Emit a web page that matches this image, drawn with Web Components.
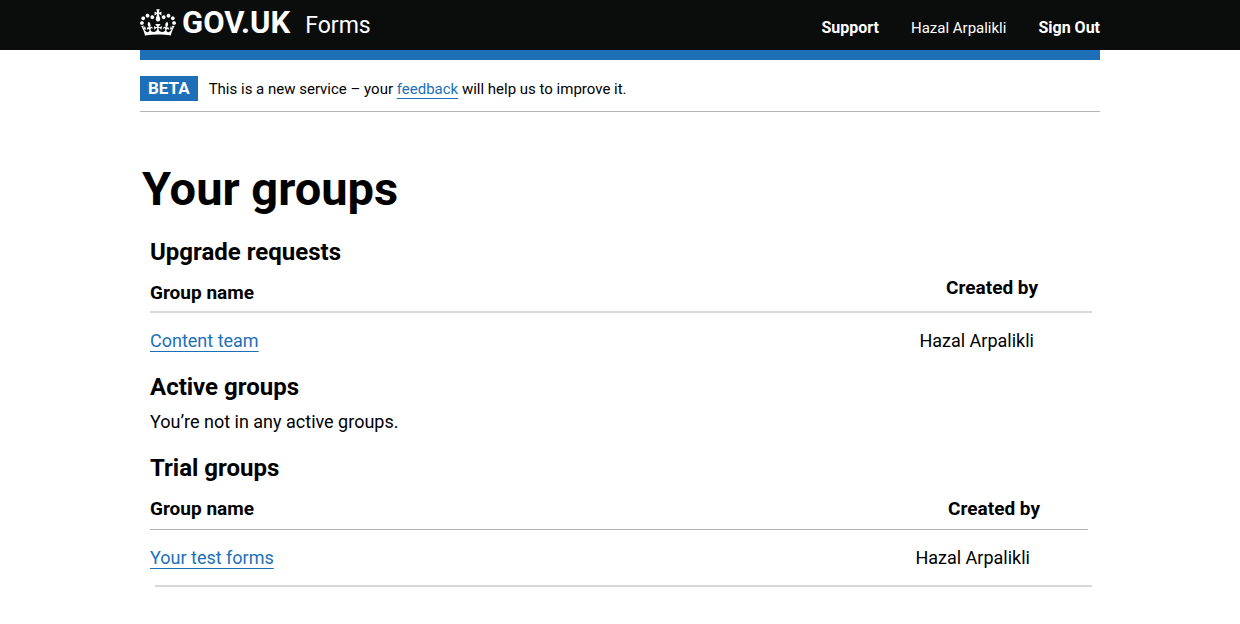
<!DOCTYPE html>
<html lang="en">
<head>
<meta charset="utf-8">
<meta name="viewport" content="width=device-width, initial-scale=1">
<title>Your groups – GOV.UK Forms</title>
<style>
  body {
    margin: 0;
    background: #fff;
    color: #000;
    font-family: Roboto, "Liberation Sans", sans-serif;
    font-size: 18px;
    line-height: 24px;
    --brand: #1d70b8;
    --ink: #0b0c0c;
    --rule: #b1b4b6;
    --rule-soft: #d8d8d8;
  }
</style>
</head>
<body>
<forms-header>
  <forms-nav-link slot="nav" href="#support">Support</forms-nav-link>
  <span slot="nav">Hazal Arpalikli</span>
  <forms-nav-link slot="nav" href="#sign-out">Sign Out</forms-nav-link>
</forms-header>
<page-container>
  <phase-banner phase="BETA">This is a new service – your <text-link href="#feedback">feedback</text-link> will help us to improve it.</phase-banner>
  <groups-page heading="Your groups">
    <group-section heading="Upgrade requests">
      <group-table variant="request" label="Upgrade requests" name="Content team" owner="Hazal Arpalikli"></group-table>
    </group-section>
    <group-section heading="Active groups">You’re not in any active groups.</group-section>
    <group-section heading="Trial groups">
      <group-table variant="trial" label="Trial groups" name="Your test forms" owner="Hazal Arpalikli"></group-table>
    </group-section>
  </groups-page>
</page-container>

<script>
  const define = (tag, render) => customElements.define(tag, class extends HTMLElement {
    constructor() {
      super();
      this.attachShadow({ mode: 'open' });
    }
    connectedCallback() {
      this.shadowRoot.innerHTML = render(this);
    }
  });
  const attr = (el, name) => (el.getAttribute(name) || '')
    .replace(/&/g, '&amp;').replace(/</g, '&lt;').replace(/"/g, '&quot;');

  define('page-container', () => `
    <style>
      :host { display: block; max-width: 960px; margin: 0 auto; }
      @media (max-width: 1020px) { :host { margin: 0 30px; } }
    </style>
    <slot></slot>`);

  define('forms-nav-link', el => `
    <style>
      :host { display: block; font-size: 16px; }
      a { color: inherit; text-decoration: none; font-weight: 700; }
      a:hover { text-decoration: underline; }
    </style>
    <a href="${attr(el, 'href')}"><slot></slot></a>`);

  define('text-link', el => `
    <style>
      :host { display: inline; }
      a { color: var(--brand); text-decoration: underline; text-decoration-thickness: 1px; text-underline-offset: 4px; }
      a:hover { text-decoration-thickness: 3px; }
    </style>
    <a href="${attr(el, 'href')}"><slot></slot></a>`);

  define('forms-header', () => `
    <style>
      :host { display: block; background: var(--ink); color: #fff; }
      .bar { display: flex; justify-content: space-between; min-height: 50px; }
      .brand { display: flex; align-items: baseline; gap: 15px; padding-top: 5px; color: inherit; text-decoration: none; line-height: 36px; }
      .logo { display: flex; align-items: baseline; gap: 6px; font-size: 31px; font-weight: 700; }
      svg { align-self: flex-start; display: block; width: 36px; height: 27px; margin-top: 4px; fill: currentColor; }
      .product { font-size: 23px; }
      nav { display: flex; gap: 32px; padding-top: 16px; font-size: 15px; }
    </style>
    <header>
      <page-container>
        <div class="bar">
          <a class="brand" href="#home">
            <span class="logo">
              <svg viewBox="0 0 132 97" aria-hidden="true"><path fill-rule="evenodd" d="M25 30.2c3.5 1.5 7.7-.2 9.1-3.7 1.5-3.6-.2-7.8-3.9-9.2-3.6-1.4-7.6.3-9.1 3.9-1.4 3.5.3 7.5 3.9 9zM9 39.5c3.6 1.5 7.8-.2 9.2-3.7 1.5-3.6-.2-7.8-3.9-9.1-3.6-1.5-7.6.2-9.1 3.8-1.4 3.5.3 7.5 3.8 9zM4.4 57.2c3.5 1.5 7.7-.2 9.1-3.8 1.5-3.6-.2-7.7-3.9-9.1-3.5-1.5-7.6.3-9.1 3.8-1.4 3.5.3 7.6 3.9 9.1zm38.3-21.4c3.5 1.5 7.7-.2 9.1-3.8 1.5-3.6-.2-7.7-3.9-9.1-3.6-1.5-7.6.3-9.1 3.8-1.3 3.6.4 7.7 3.9 9.1zm64.4-5.6c-3.6 1.5-7.8-.2-9.1-3.7-1.5-3.6.2-7.8 3.8-9.2 3.6-1.4 7.7.3 9.2 3.9 1.3 3.5-.4 7.5-3.9 9zm15.9 9.3c-3.6 1.5-7.7-.2-9.1-3.7-1.5-3.6.2-7.8 3.7-9.1 3.6-1.5 7.7.2 9.2 3.8 1.5 3.5-.3 7.5-3.8 9zm4.7 17.7c-3.6 1.5-7.8-.2-9.2-3.8-1.5-3.6.2-7.7 3.9-9.1 3.6-1.5 7.7.3 9.2 3.8 1.3 3.5-.4 7.6-3.9 9.1zM89.3 35.8c-3.6 1.5-7.8-.2-9.2-3.8-1.4-3.6.2-7.7 3.9-9.1 3.6-1.5 7.7.3 9.2 3.8 1.4 3.6-.3 7.7-3.9 9.1zM69.7 17.7l8.9 4.7V9.3l-8.9 2.8c-.2-.3-.5-.6-.9-.9L72.4 0H59.6l3.5 11.2c-.3.3-.6.5-.9.9l-8.8-2.8v13.1l8.8-4.7c.3.3.6.7.9.9l-5 15.4v.1c-.2.8-.4 1.6-.4 2.4 0 4.1 3.1 7.5 7 8.1h.2c.3 0 .7.1 1 .1.4 0 .7 0 1-.1h.2c4-.6 7.1-4.1 7.1-8.1 0-.8-.1-1.7-.4-2.4V34l-5.1-15.4c.4-.2.7-.6 1-.9zM66 92.8c16.9 0 32.8 1.1 47.1 3.2 4-16.9 8.9-26.7 14-33.5l-9.6-3.4c1 4.9 1.1 7.2 0 10.2-1.5-1.4-3-4.3-4.2-8.7L108.6 76c2.8-2 5-3.2 7.5-3.3-4.4 9.4-10 11.9-13.6 11.2-4.3-.8-6.3-4.6-5.6-7.9 1-4.7 5.7-5.9 8-.5 4.3-8.7-3-11.4-7.6-8.8 7.1-7.2 7.9-13.5 2.1-21.1-8 6.1-8.1 12.3-4.5 20.8-4.7-5.4-12.1-2.5-9.5 6.2 3.4-5.2 7.9-2 7.2 3.1-.6 4.3-6.4 7.8-13.5 7.2-10.3-.9-10.9-8-11.2-13.8 2.5-.5 7.1 1.8 11 7.3L80.2 60c-4.1 4.4-8 5.3-12.3 5.4 1.4-4.4 8-11.6 8-11.6H55.5s6.4 7.2 7.9 11.6c-4.2-.1-8-1-12.3-5.4l1.4 16.4c3.9-5.5 8.5-7.7 10.9-7.3-.3 5.8-.9 12.8-11.1 13.8-7.2.6-12.9-2.9-13.5-7.2-.7-5 3.8-8.3 7.1-3.1 2.7-8.7-4.6-11.6-9.4-6.2 3.7-8.5 3.6-14.7-4.6-20.8-5.8 7.6-5 13.9 2.2 21.1-4.7-2.6-11.9.1-7.7 8.8 2.3-5.5 7.1-4.2 8.1.5.7 3.3-1.3 7.1-5.7 7.9-3.5.7-9-1.8-13.5-11.2 2.5.1 4.7 1.3 7.5 3.3l-4.7-15.4c-1.2 4.4-2.7 7.2-4.3 8.7-1.1-3-.9-5.3 0-10.2l-9.5 3.4c5 6.9 9.9 16.7 14 33.5 14.8-2.1 30.8-3.2 47.7-3.2z"/></svg>
              <span>GOV.UK</span>
            </span>
            <span class="product">Forms</span>
          </a>
          <nav aria-label="Account"><slot name="nav"></slot></nav>
        </div>
      </page-container>
    </header>`);

  define('phase-banner', el => `
    <style>
      :host {
        display: flex; align-items: baseline; gap: 11px;
        padding: 16px 0 10px;
        border-top: 10px solid var(--brand);
        border-bottom: 1px solid var(--rule);
        font-size: 15px;
      }
      strong { padding: 0 8px; background: var(--brand); color: #fff; font-size: 17px; line-height: 25px; }
      .message { line-height: 20px; }
    </style>
    <strong>${attr(el, 'phase')}</strong>
    <span class="message"><slot></slot></span>`);

  define('groups-page', el => `
    <style>
      :host { display: block; padding-top: 52px; }
      h1 { margin: 0 0 23px; padding-left: 2px; font-size: 47px; line-height: 50px; font-weight: 700; }
      .sections { display: flex; flex-direction: column; gap: 19px; padding: 0 8px 0 10px; }
    </style>
    <main>
      <h1>${attr(el, 'heading')}</h1>
      <div class="sections"><slot></slot></div>
    </main>`);

  define('group-section', el => `
    <style>
      :host { display: block; }
      h2 { margin: 0 0 8px; font-size: 24px; line-height: 30px; font-weight: 700; }
    </style>
    <section>
      <h2>${attr(el, 'heading')}</h2>
      <slot></slot>
    </section>`);

  define('group-table', el => `
    <style>
      :host { display: block; }
      table { width: 100%; border-collapse: separate; border-spacing: 0; }
      th, td { padding: 0; text-align: left; font-weight: 400; }
      thead th { font-size: 19px; font-weight: 700; padding: 6px 0 8px; border-bottom: 1px solid var(--rule); }
      tbody th, tbody td { padding-top: 16px; }
      tr > :last-child { text-align: right; }
      thead th:last-child { padding-right: 54px; }
      tbody td { padding-right: 58px; }
      :host([variant="request"]) thead th { padding-bottom: 6px; border-bottom: 2px solid var(--rule-soft); }
      :host([variant="request"]) thead th:last-child { padding-top: 1px; vertical-align: top; }
      :host([variant="trial"]) table { width: calc(100% - 4px); }
      :host([variant="trial"]) thead th:last-child { padding-right: 48px; }
      hr { display: none; margin: 15px 0 0 5px; border: 0; border-top: 2px solid var(--rule-soft); }
      :host([variant="trial"]) hr { display: block; }
    </style>
    <table aria-label="${attr(el, 'label')}">
      <thead><tr><th scope="col">Group name</th><th scope="col">Created by</th></tr></thead>
      <tbody><tr>
        <th scope="row"><text-link href="#group">${attr(el, 'name')}</text-link></th>
        <td>${attr(el, 'owner')}</td>
      </tr></tbody>
    </table>
    <hr>`);
</script>
</body>
</html>
